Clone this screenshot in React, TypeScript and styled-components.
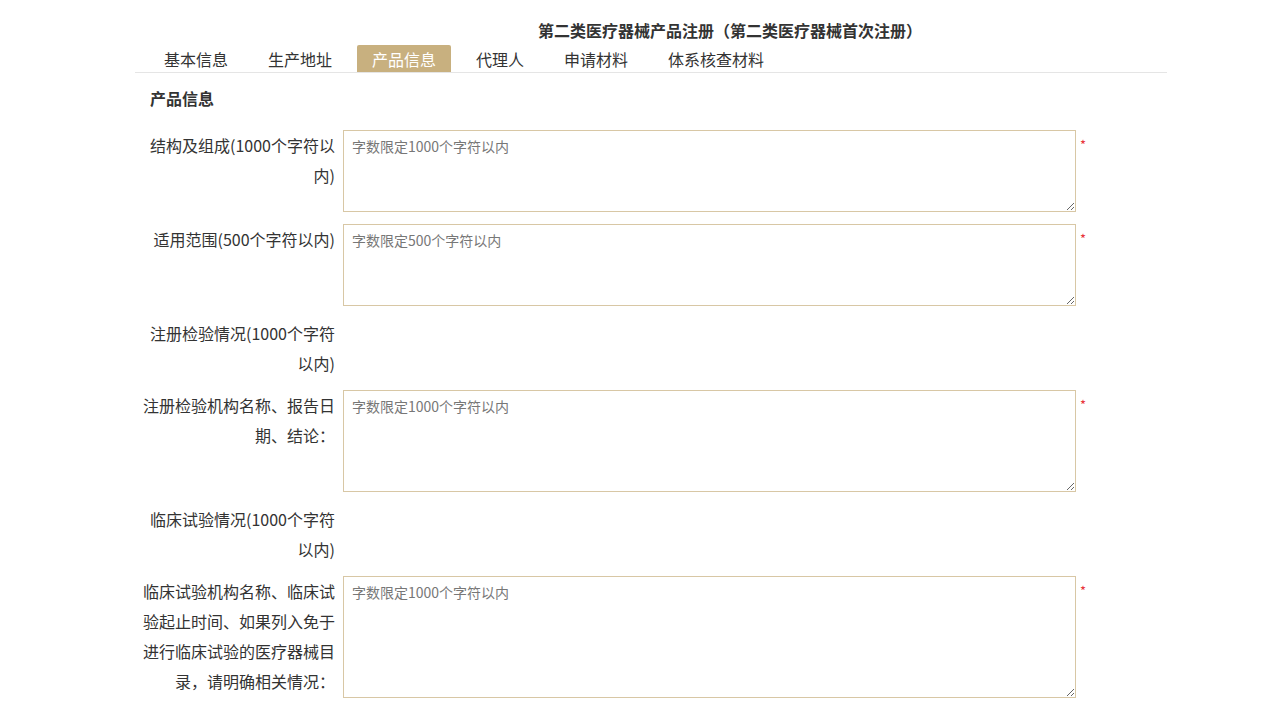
import styled, { createGlobalStyle } from "styled-components";

const GlobalStyle = createGlobalStyle`
  body {
    margin: 0;
    background: #fff;
    font-family: "Microsoft YaHei", "Noto Sans CJK SC", sans-serif;
    color: #333;
  }
`;

const Page = styled.div`
  width: 1032px;
  margin-left: 135px;
`;

const Title = styled.h1`
  margin: 0;
  padding: 20px 0 0 158px;
  height: 25px;
  line-height: 20px;
  text-align: center;
  font-size: 16px;
  font-weight: bold;
  color: #333;
`;

const TabBar = styled.div`
  display: flex;
  gap: 10px;
  padding-left: 14px;
  border-bottom: 1px solid #e5e5e5;
`;

const Tab = styled.div<{ $active?: boolean }>`
  padding: 0 15px;
  height: 27px;
  line-height: 29px;
  font-size: 16px;
  border-radius: 2px 2px 0 0;
  cursor: pointer;
  color: ${({ $active }) => ($active ? "#fff" : "#333")};
  background: ${({ $active }) => ($active ? "#c8b07f" : "transparent")};
`;

const SectionTitle = styled.h2`
  margin: 0 0 12px;
  padding: 5px 0 0 15px;
  line-height: 40px;
  font-size: 16px;
  font-weight: bold;
  color: #333;
`;

const Form = styled.div`
  display: flex;
  flex-direction: column;
  gap: 12px;
`;

const Row = styled.div`
  display: flex;
  align-items: flex-start;
`;

const Label = styled.div`
  width: 195px;
  padding-left: 5px;
  text-align: right;
  font-size: 16px;
  line-height: 30px;
  color: #333;
  word-break: break-all;
`;

const Field = styled.textarea<{ $h: number }>`
  box-sizing: border-box;
  margin-left: 8px;
  width: 733px;
  height: ${({ $h }) => $h}px;
  padding: 6px 8px;
  border: 1px solid #d8c7a5;
  border-radius: 0;
  outline: none;
  font-family: inherit;
  font-size: 14px;
  line-height: 18px;
  color: #333;
  &::placeholder {
    color: #777;
  }
`;

const Required = styled.span`
  margin-left: 4px;
  padding-top: 8px;
  color: #e8333a;
  font-size: 13px;
  line-height: 14px;
`;

const tabs = ["基本信息", "生产地址", "产品信息", "代理人", "申请材料", "体系核查材料"];

type Item = { label: string; height?: number; placeholder?: string };

const items: Item[] = [
  { label: "结构及组成(1000个字符以内)", height: 82, placeholder: "字数限定1000个字符以内" },
  { label: "适用范围(500个字符以内)", height: 82, placeholder: "字数限定500个字符以内" },
  { label: "注册检验情况(1000个字符以内)" },
  { label: "注册检验机构名称、报告日期、结论：", height: 102, placeholder: "字数限定1000个字符以内" },
  { label: "临床试验情况(1000个字符以内)" },
  {
    label: "临床试验机构名称、临床试验起止时间、如果列入免于进行临床试验的医疗器械目录，请明确相关情况：",
    height: 122,
    placeholder: "字数限定1000个字符以内",
  },
];

export default function App() {
  return (
    <>
      <GlobalStyle />
      <Page>
        <Title>第二类医疗器械产品注册（第二类医疗器械首次注册）</Title>
        <TabBar>
          {tabs.map((t) => (
            <Tab key={t} $active={t === "产品信息"}>
              {t}
            </Tab>
          ))}
        </TabBar>
        <SectionTitle>产品信息</SectionTitle>
        <Form>
          {items.map((it) => (
            <Row key={it.label}>
              <Label>{it.label}</Label>
              {it.height && (
                <>
                  <Field $h={it.height} placeholder={it.placeholder} />
                  <Required>*</Required>
                </>
              )}
            </Row>
          ))}
        </Form>
      </Page>
    </>
  );
}
